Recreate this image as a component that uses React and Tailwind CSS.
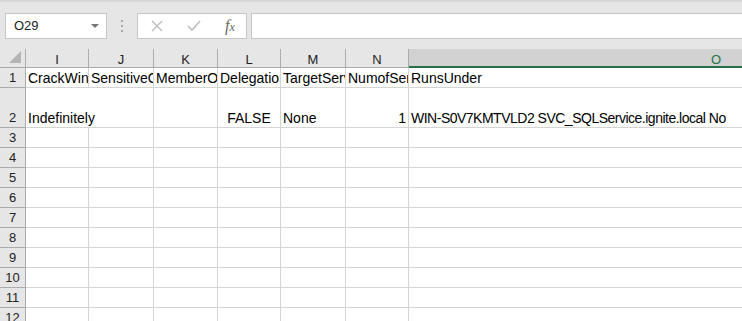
import React from "react";

const cols = [
  { key: "I", w: "w-[63px]" },
  { key: "J", w: "w-[65px]" },
  { key: "K", w: "w-[64px]" },
  { key: "L", w: "w-[63px]" },
  { key: "M", w: "w-[65px]" },
  { key: "N", w: "w-[63px]" },
];

const row1 = ["CrackWindows", "SensitiveOrNot", "MemberOfGroups", "DelegationEnabled", "TargetServers", "NumofServers"];

function Cell({ w, children, align = "left", tall = false }) {
  const al = align === "right" ? "justify-end" : align === "center" ? "justify-center" : "justify-start";
  return (
    <div
      className={`${w} shrink-0 ${tall ? "h-[40px]" : "h-[20px]"} border-r border-b border-[#d4d4d4] flex items-end ${al} px-[2px] overflow-hidden whitespace-nowrap`}
    >
      {children}
    </div>
  );
}

function RowHead({ n, tall }) {
  return (
    <div
      className={`w-[26px] shrink-0 ${tall ? "h-[40px]" : "h-[20px]"} bg-[#e6e6e6] border-r border-b border-[#ababab] flex items-end justify-center text-[13px] leading-[18px] text-[#222]`}
    >
      {n}
    </div>
  );
}

const T = ({ children, cls = "" }) => (
  <span className={`text-[14px] leading-[18px] text-black ${cls}`}>{children}</span>
);

export default function App() {
  return (
    <div
      className="w-[742px] h-[321px] overflow-hidden bg-[#e6e6e6] relative"
      style={{ fontFamily: '"Liberation Sans", Arial, sans-serif' }}
    >
      <div className="h-[4px] bg-gradient-to-b from-[#d4d4d4] to-[#e6e6e6]" />
      {/* formula bar */}
      <div className="flex items-center h-[26px] mt-[9px]">
        <div className="ml-[5px] w-[102px] h-[26px] bg-white border border-[#c6c6c6] flex items-center justify-between pl-[8px] pr-[7px]">
          <span className="text-[13px] text-[#222]">O29</span>
          <svg width="8" height="5" viewBox="0 0 8 5">
            <path d="M0 0 L8 0 L4 4 Z" fill="#767676" />
          </svg>
        </div>
        <div className="w-[30px] flex flex-col items-center gap-[3px]">
          <div className="w-[2px] h-[2px] bg-[#a6a6a6]" />
          <div className="w-[2px] h-[2px] bg-[#a6a6a6]" />
          <div className="w-[2px] h-[2px] bg-[#a6a6a6]" />
        </div>
        <div className="w-[110px] h-[26px] bg-white border border-[#c6c6c6] flex items-center">
          <svg className="ml-[13px]" width="12" height="12" viewBox="0 0 12 12">
            <path d="M1 1 L11 11 M11 1 L1 11" stroke="#bdbdbd" strokeWidth="1.4" fill="none" />
          </svg>
          <svg className="ml-[24px]" width="14" height="12" viewBox="0 0 14 12">
            <path d="M1 6 L5 10 L13 1" stroke="#bdbdbd" strokeWidth="1.6" fill="none" />
          </svg>
          <span
            className="ml-[24px] text-[16px] italic text-[#666] leading-none"
            style={{ fontFamily: '"Liberation Serif", "Times New Roman", serif' }}
          >
            f<span className="text-[12px]">x</span>
          </span>
        </div>
        <div className="ml-[4px] flex-1 h-[26px] bg-white border border-[#c6c6c6] border-r-0" />
      </div>
      {/* grid */}
      <div className="mt-[10px] w-[1100px]">
        {/* header row */}
        <div className="flex h-[19px]">
          <div className="w-[26px] shrink-0 border-r border-b border-[#ababab] bg-[#e6e6e6] relative">
            <svg className="absolute right-[4px] bottom-[4px]" width="12" height="12" viewBox="0 0 12 12">
              <path d="M12 0 L12 12 L0 12 Z" fill="#b4b4b4" />
            </svg>
          </div>
          {cols.map((c) => (
            <div
              key={c.key}
              className={`${c.w} shrink-0 border-r border-b border-[#ababab] flex items-center justify-center text-[13px] text-[#222] pt-[4px]`}
            >
              {c.key}
            </div>
          ))}
          <div className="w-[614px] shrink-0 bg-[#d2d2d2] border-b-2 border-[#217346] flex items-center justify-center text-[13px] text-[#217346] pt-[4px]">
            O
          </div>
        </div>
        {/* row 1 */}
        <div className="flex bg-white">
          <RowHead n="1" />
          {cols.map((c, i) => (
            <Cell key={c.key} w={c.w}>
              <T>{row1[i]}</T>
            </Cell>
          ))}
          <Cell w="w-[614px]">
            <T>RunsUnder</T>
          </Cell>
        </div>
        {/* row 2 */}
        <div className="flex bg-white">
          <RowHead n="2" tall />
          <div className="w-[128px] shrink-0 h-[40px] border-r border-b border-[#d4d4d4] flex items-end px-[2px] whitespace-nowrap overflow-visible">
            <T>Indefinitely</T>
          </div>
          <Cell w="w-[64px]" tall />
          <Cell w="w-[63px]" tall align="center">
            <T>FALSE</T>
          </Cell>
          <Cell w="w-[65px]" tall>
            <T>None</T>
          </Cell>
          <Cell w="w-[63px]" tall align="right">
            <T>1</T>
          </Cell>
          <Cell w="w-[614px]" tall>
            <T cls="tracking-[-0.5px]">WIN-S0V7KMTVLD2 SVC_SQLService.ignite.local No</T>
          </Cell>
        </div>
        {[3, 4, 5, 6, 7, 8, 9, 10, 11, 12].map((n) => (
          <div key={n} className="flex bg-white">
            <RowHead n={String(n)} />
            {cols.map((c) => (
              <Cell key={c.key} w={c.w} />
            ))}
            <Cell w="w-[614px]" />
          </div>
        ))}
      </div>
    </div>
  );
}
